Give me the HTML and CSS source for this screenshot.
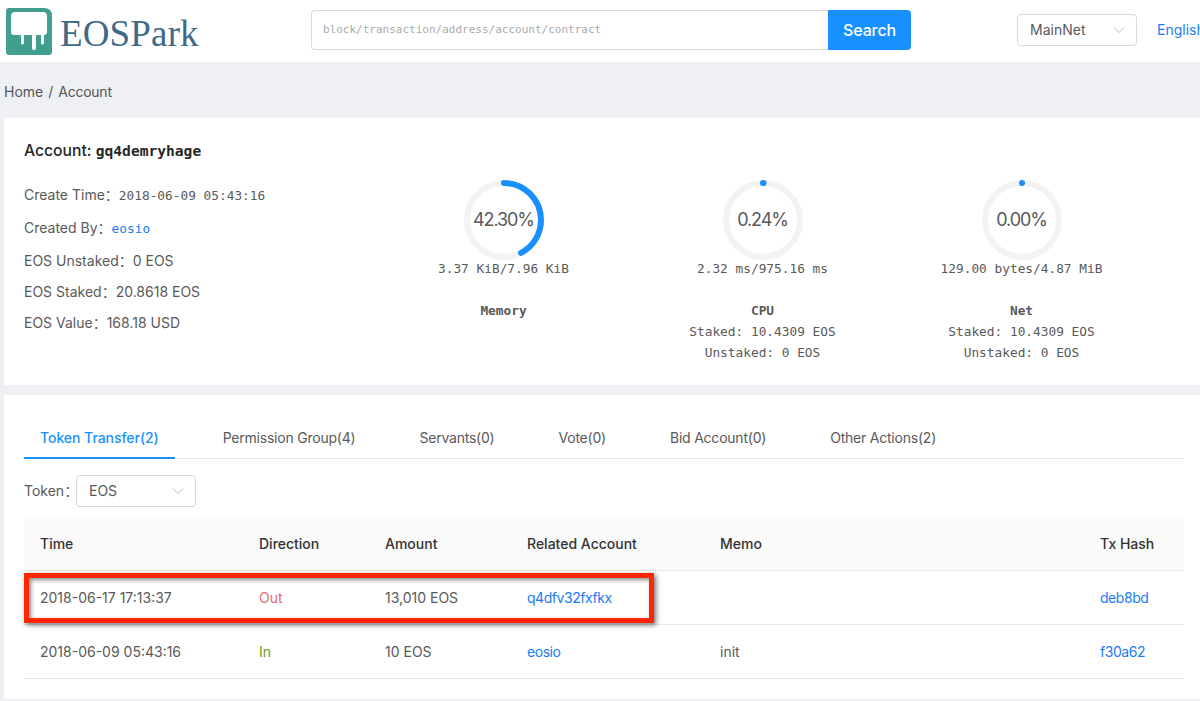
FILE: index.html
```html
<!DOCTYPE html>
<html lang="en">
<head>
<meta charset="utf-8">
<title>EOSPark - Account</title>
<link rel="stylesheet" href="styles.css">
</head>
<body>
<header class="topbar">
  <div class="brand">
    <svg class="logo" width="46" height="47" viewBox="0 0 46 47" aria-hidden="true">
      <path d="M3 0H38Q46 0 46 8V44Q46 47 43 47H3Q0 47 0 44V3Q0 0 3 0Z" fill="#429e8f"/>
      <path d="M9 4H37Q41 4 41 8V24Q41 27 38 27V35Q38 36.500 36.500 36.500Q35 36.500 35 35V27H30V40.500Q30 42 28 42Q26 42 26 40.500V27H18V35Q18 36.500 16.500 36.500Q15 36.500 15 35V27H8Q5 27 5 24V8Q5 4 9 4Z" fill="#fff"/>
    </svg>
    <span class="wordmark">EOSPark</span>
  </div>
  <div class="search">
    <div class="search-input">block/transaction/address/account/contract</div>
    <div class="search-btn">Search</div>
  </div>
  <div class="select net-select"><span>MainNet</span>
    <svg class="chev" width="12" height="8" viewBox="0 0 12 8" aria-hidden="true"><path d="M1 1.500L6 6.500L11 1.500" fill="none" stroke="#bfbfbf" stroke-width="1"/></svg>
  </div>
  <a class="lang">English</a>
</header>

<nav class="crumbs"><span>Home</span><span class="sep">/</span><span class="tight">Account</span></nav>

<section class="card info">
  <div class="details">
    <h1 class="acct">Account: <b class="mono">gq4demryhage</b></h1>
    <p class="row r1">Create Time：<span class="mono">2018-06-09 05:43:16</span></p>
    <p class="row r1">Created By：<a class="mono link">eosio</a></p>
    <p class="row r2">EOS Unstaked：0 EOS</p>
    <p class="row r2">EOS Staked：20.8618 EOS</p>
    <p class="row r2">EOS Value：168.18 USD</p>
  </div>
  <div class="gauge">
    <div class="ring">
      <svg width="80" height="80" viewBox="0 0 80 80" aria-hidden="true">
        <circle cx="40" cy="40" r="37" class="track"/>
        <circle cx="40" cy="40" r="37" class="bar" stroke-dasharray="98.340 232.478" transform="rotate(-90 40 40)"/>
      </svg>
      <span class="pct">42.30%</span>
    </div>
    <div class="usage">3.37 KiB/7.96 KiB</div>
    <div class="gname">Memory</div>
  </div>
  <div class="gauge">
    <div class="ring">
      <svg width="80" height="80" viewBox="0 0 80 80" aria-hidden="true">
        <circle cx="40" cy="40" r="37" class="track"/>
        <circle cx="40" cy="40" r="37" class="bar" stroke-dasharray="0.560 232.478" transform="rotate(-90 40 40)"/>
      </svg>
      <span class="pct">0.24%</span>
    </div>
    <div class="usage">2.32 ms/975.16 ms</div>
    <div class="gname">CPU</div>
    <div class="stake">Staked: 10.4309 EOS</div>
    <div class="stake">Unstaked: 0 EOS</div>
  </div>
  <div class="gauge">
    <div class="ring">
      <svg width="80" height="80" viewBox="0 0 80 80" aria-hidden="true">
        <circle cx="40" cy="40" r="37" class="track"/>
        <circle cx="40" cy="40" r="37" class="bar" stroke-dasharray="0.010 232.478" transform="rotate(-90 40 40)"/>
      </svg>
      <span class="pct">0.00%</span>
    </div>
    <div class="usage">129.00 bytes/4.87 MiB</div>
    <div class="gname">Net</div>
    <div class="stake">Staked: 10.4309 EOS</div>
    <div class="stake">Unstaked: 0 EOS</div>
  </div>
</section>

<section class="card transfers">
  <div class="tabs">
    <div class="tab active">Token Transfer(2)</div>
    <div class="tab">Permission Group(4)</div>
    <div class="tab">Servants(0)</div>
    <div class="tab">Vote(0)</div>
    <div class="tab">Bid Account(0)</div>
    <div class="tab">Other Actions(2)</div>
  </div>
  <div class="filter">
    <span>Token：</span>
    <div class="select token-select"><span>EOS</span>
      <svg class="chev" width="12" height="8" viewBox="0 0 12 8" aria-hidden="true"><path d="M1 1.500L6 6.500L11 1.500" fill="none" stroke="#bfbfbf" stroke-width="1"/></svg>
    </div>
  </div>
  <table class="grid">
    <colgroup><col class="c1"><col class="c2"><col class="c3"><col class="c4"><col class="c5"><col class="c6"></colgroup>
    <thead>
      <tr><th>Time</th><th>Direction</th><th>Amount</th><th>Related Account</th><th>Memo</th><th>Tx Hash</th></tr>
    </thead>
    <tbody>
      <tr><td>2018-06-17 17:13:37</td><td class="out">Out</td><td>13,010 EOS</td><td><a class="link cell-link">q4dfv32fxfkx</a></td><td></td><td><a class="link cell-link">deb8bd</a></td></tr>
      <tr><td>2018-06-09 05:43:16</td><td class="in">In</td><td>10 EOS</td><td><a class="link cell-link">eosio</a></td><td>init</td><td><a class="link cell-link">f30a62</a></td></tr>
    </tbody>
  </table>
  <div class="callout"></div>
</section>
</body>
</html>
```
FILE: styles.css
```css
* { box-sizing: border-box; }
html, body { margin: 0; height: 701px; overflow: hidden; }
body {
  position: relative;
  background: #eef0f4;
  color: #595959;
  font-family: Inter, "Noto Sans CJK SC", "Liberation Sans", sans-serif;
  font-size: 14px;
  line-height: 20px;
}
.mono { font-family: "DejaVu Sans Mono", monospace; }
.link { color: #1a7cf5; }
.tight { letter-spacing: -.25px; }
.cell-link { letter-spacing: -.45px; }

.topbar {
  display: flex;
  align-items: center;
  height: 62px;
  width: 1260px;
  padding-left: 6px;
  background: #fff;
}
.brand { display: flex; align-items: center; width: 305px; }
.logo { flex: none; margin-top: 1px; }
.wordmark {
  margin-left: 8px;
  margin-top: 5px;
  font-family: "Liberation Serif", serif;
  font-size: 37px;
  letter-spacing: .15px;
  line-height: 40px;
  color: #3f6a87;
}
.search { display: flex; width: 600px; height: 40px; margin-top: -2px; }
.search-input {
  flex: 1;
  padding-left: 11px;
  border: 1px solid #d9d9d9;
  border-right: 0;
  border-radius: 4px 0 0 4px;
  font-family: "DejaVu Sans Mono", monospace;
  font-size: 11px;
  line-height: 38px;
  color: #aaa;
}
.search-btn {
  width: 83px;
  background: #1890ff;
  border-radius: 0 4px 4px 0;
  color: #fff;
  font-size: 16px;
  font-weight: 500;
  letter-spacing: -.1px;
  line-height: 40px;
  text-align: center;
}
.select {
  display: flex;
  align-items: center;
  justify-content: space-between;
  width: 120px;
  height: 32px;
  padding: 0 11px 0 12px;
  border: 1px solid #d9d9d9;
  border-radius: 4px;
  background: #fff;
}
.net-select { margin-left: 106px; margin-top: -2px; }
.lang { margin-left: 20px; margin-top: -2px; color: #1a7cf5; }

.crumbs {
  display: flex;
  align-items: center;
  height: 56px;
  padding: 3px 0 0 4px;
  color: #555;
}
.sep { margin: 0 5px; }

.card { margin-left: 4px; background: #fff; }
.info {
  display: grid;
  grid-template-columns: 350px 259px 259px 259px;
  height: 267px;
  padding: 0 20px;
}
.details { padding-top: 23px; }
.acct {
  margin: 0 0 24px;
  font-size: 15.700px;
  line-height: 20px;
  font-weight: 500;
  color: #262626;
}
.acct b { font-size: 14.600px; font-weight: 700; }
.row { margin: 0; font-size: 14px; }
.r1 { height: 33px; }
.r1 .mono { font-size: 12.800px; }
.r2 { height: 31px; }

.gauge {
  padding-top: 62px;
  font-family: "DejaVu Sans Mono", monospace;
  font-size: 12.800px;
  line-height: 21px;
  text-align: center;
}
.ring { position: relative; width: 80px; height: 80px; margin: 0 auto; }
.ring svg { display: block; }
.track { fill: none; stroke: #f3f3f3; stroke-width: 6; }
.bar { fill: none; stroke: #1890ff; stroke-width: 6; stroke-linecap: round; }
.pct {
  position: absolute;
  inset: 0;
  font-family: Inter, sans-serif;
  font-size: 18px;
  letter-spacing: -1.100px;
  line-height: 80px;
  text-align: center;
}
.usage { margin-top: -2px; margin-bottom: 21px; }
.gname { font-weight: 700; }

.transfers {
  position: relative;
  height: 304px;
  margin-top: 10px;
  padding: 20px 16px 0 20px;
}
.tabs {
  display: flex;
  gap: 32px;
  height: 44px;
  border-bottom: 1px solid #e8e8e8;
}
.tab { padding: 13px 16px 0; height: 44px; color: #595959; letter-spacing: -.22px; }
.tab.active {
  color: #1890ff;
  font-weight: 500;
  letter-spacing: -.05px;
  border-bottom: 2px solid #1890ff;
}
.filter {
  display: flex;
  align-items: center;
  height: 32px;
  margin-top: 16px;
}
.filter > span { width: 52px; }
.token-select { padding-left: 12px; }

.grid {
  width: 1160px;
  margin-top: 10px;
  border-collapse: collapse;
  table-layout: fixed;
}
.c1 { width: 219px; } .c2 { width: 126px; } .c3 { width: 142px; }
.c4 { width: 193px; } .c5 { width: 380px; } .c6 { width: 100px; }
th, td {
  height: 54px;
  padding: 1px 16px 0;
  border-bottom: 1px solid #e8e8e8;
  text-align: left;
  font-weight: 400;
}
th { height: 53px; padding-top: 2px; background: #fafafa; color: #333; font-weight: 500; }
.out { color: #e06c6c; }
.in { color: #5aa02c; }
.callout {
  position: absolute;
  left: 20px;
  top: 178px;
  width: 630px;
  height: 50px;
  border: 5px solid #ff2600;
  box-shadow: 2px 2px 5px rgba(0, 0, 0, .55), inset 2px 2px 4px rgba(0, 0, 0, .45);
}
```
